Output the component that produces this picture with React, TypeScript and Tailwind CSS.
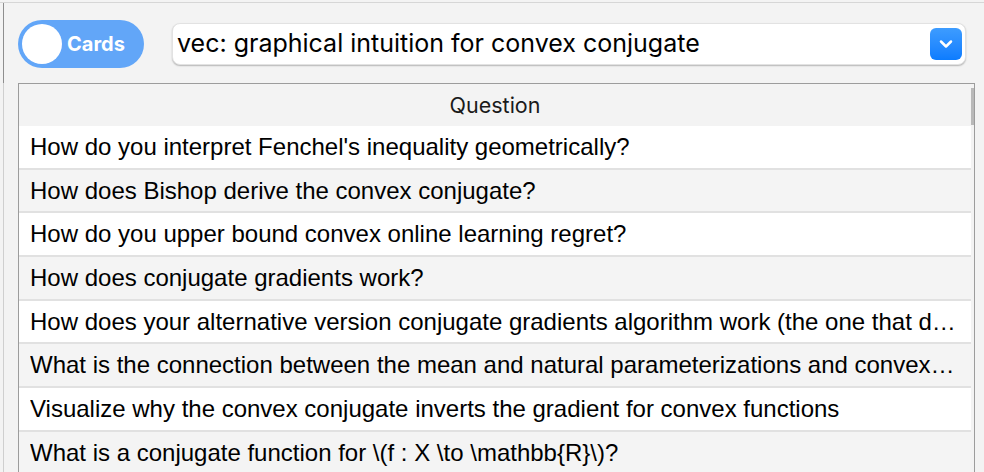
import { ChevronDown } from "lucide-react";

const questions = [
  "How do you interpret Fenchel's inequality geometrically?",
  "How does Bishop derive the convex conjugate?",
  "How do you upper bound convex online learning regret?",
  "How does conjugate gradients work?",
  "How does your alternative version conjugate gradients algorithm work (the one that does not need the Hessian explicitly)?",
  "What is the connection between the mean and natural parameterizations and convex conjugates?",
  "Visualize why the convex conjugate inverts the gradient for convex functions",
  "What is a conjugate function for \\(f : X \\to \\mathbb{R}\\)?",
];

export default function App() {
  return (
    <div className="w-[984px] h-[472px] overflow-hidden bg-[#f3f3f3] pt-[2px]">
      <div className="h-[470px] border-t border-[#d6d6d6] flex">
        <div className="w-[3px]" />
        <div className="w-px flex flex-col">
          <div className="h-[80px] bg-[#8e8e8e]" />
          <div className="flex-1 bg-[#cfcfcf]" />
        </div>
        <div className="flex-1 flex flex-col pl-[14px]">
          <div className="flex items-center gap-[28px] pt-[17px] h-[65px]">
            <div className="w-[126px] h-[48px] rounded-full bg-[#62a6f8] flex items-center pl-[4px] gap-[5px]">
              <div className="w-[40px] h-[40px] rounded-full bg-white" />
              <span className="text-white font-bold text-[20px] font-['Inter',sans-serif]">Cards</span>
            </div>
            <div className="w-[794px] h-[42px] rounded-[8px] bg-white border border-[#e2e2e2] shadow-[0_1px_1.5px_rgba(0,0,0,0.25)] flex items-center justify-between pl-[4px] pr-[3px]">
              <span className="text-[25px] text-black font-['Inter',sans-serif]">vec: graphical intuition for convex conjugate</span>
              <div className="w-[32px] h-[32px] rounded-[6px] bg-gradient-to-b from-[#3d9cff] to-[#0b7cff] flex items-center justify-center">
                <ChevronDown className="text-white" size={20} strokeWidth={3} />
              </div>
            </div>
          </div>
          <div className="mt-[15px] w-[957px] flex-1 border-t border-l border-r border-[#9c9c9c] flex">
            <div className="flex-1 flex flex-col min-w-0">
              <div className="h-[42px] flex items-center justify-center text-[21.5px] text-[#1a1a1a] font-['Inter',sans-serif]">
                Question
              </div>
              {questions.map((q, i) => (
                <div
                  key={i}
                  className={`h-[43.7px] shrink-0 border-b-2 border-[#e1e1e1] flex items-center px-[11px] ${i % 2 === 0 ? "bg-white" : "bg-[#f4f4f4]"}`}
                >
                  <span className="truncate text-[24px] text-black font-['Liberation_Sans',Arial,sans-serif]">{q}</span>
                </div>
              ))}
            </div>
            <div className="w-[3px] flex flex-col pt-[4px]">
              <div className="h-[37px] bg-[#b9b9b9]" />
            </div>
          </div>
        </div>
      </div>
    </div>
  );
}
